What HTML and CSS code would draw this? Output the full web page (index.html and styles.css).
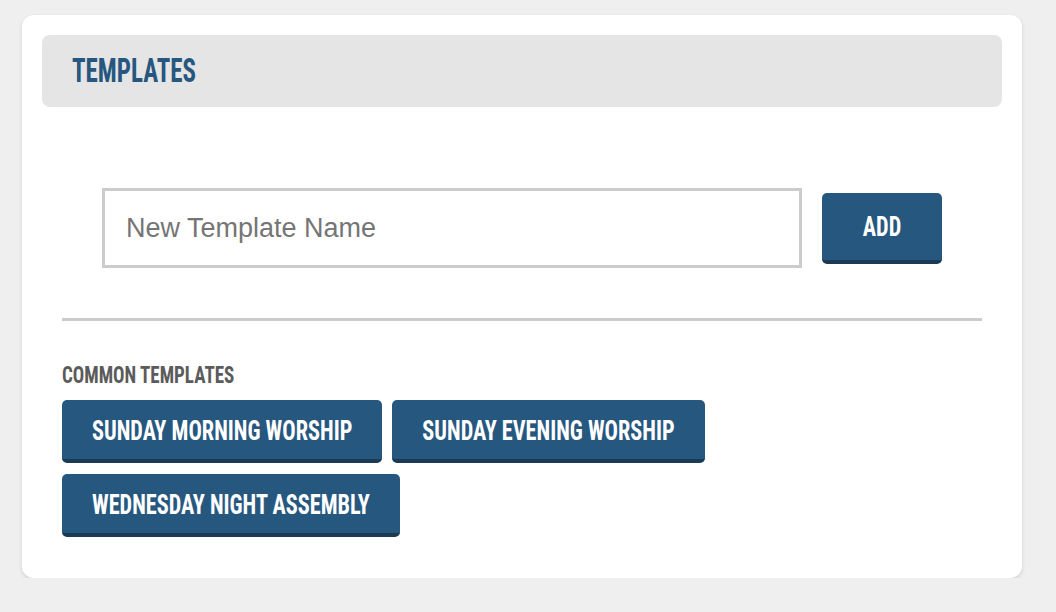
FILE: index.html
```html
<!DOCTYPE html>
<html lang="en">
<head>
<meta charset="utf-8">
<title>Templates</title>
<link rel="stylesheet" href="styles.css">
</head>
<body>
<div class="card">
  <div class="card-header">
    <h2 class="title"><span class="tall">TEMPLATES</span></h2>
  </div>
  <form class="new-row" onsubmit="return false">
    <input class="name-input" type="text" placeholder="New Template Name">
    <button class="btn btn-add" type="button"><span class="tall">ADD</span></button>
  </form>
  <hr class="divider">
  <div class="common">
    <div class="label"><span class="tall">COMMON TEMPLATES</span></div>
    <div class="chips">
      <button class="btn chip" type="button"><span class="tall">SUNDAY MORNING WORSHIP</span></button>
      <button class="btn chip" type="button"><span class="tall">SUNDAY EVENING WORSHIP</span></button>
      <button class="btn chip" type="button"><span class="tall">WEDNESDAY NIGHT ASSEMBLY</span></button>
    </div>
  </div>
</div>
</body>
</html>
```
FILE: styles.css
```css
html, body {
  margin: 0;
  padding: 0;
  background: #efefef;
}
body {
  padding: 15px 0 0 22px;
  font-family: "Roboto Condensed", "Open Sans", sans-serif;
}
.card {
  box-sizing: border-box;
  width: 1000px;
  background: #fff;
  border-radius: 12px;
  padding: 20px 20px 41px;
  box-shadow: 0 2px 4px rgba(0, 0, 0, 0.12);
}
.card-header {
  box-sizing: border-box;
  height: 72px;
  background: #e5e5e5;
  border-radius: 8px;
  padding: 0 30px;
  display: flex;
  align-items: center;
}
.title {
  margin: 0;
  font-size: 25px;
  font-weight: 700;
  color: #27577f;
  line-height: 30px;
}
.tall {
  display: inline-block;
  transform: scaleY(1.2);
}
.title .tall {
  transform: scaleY(1.32);
}
.new-row {
  margin: 81px 0 0;
  display: flex;
  justify-content: center;
  align-items: center;
  gap: 20px;
}
.name-input {
  box-sizing: border-box;
  width: 700px;
  height: 80px;
  border: 3px solid #cccccc;
  border-radius: 0;
  padding: 0 21px;
  font-family: "Liberation Sans", Arial, sans-serif;
  font-size: 27px;
  color: #333;
  outline: none;
  background: #fff;
}
.name-input::placeholder {
  color: #757575;
}
.btn {
  box-sizing: border-box;
  border: 0;
  border-bottom: 4px solid #1b3a55;
  border-radius: 5px;
  background: #26577f;
  color: #fff;
  font-family: "Roboto Condensed", "Open Sans", sans-serif;
  font-weight: 700;
  font-size: 22.25px;
  line-height: 24px;
  padding: 0 30px;
  cursor: pointer;
  white-space: nowrap;
}
.btn-add {
  width: 120px;
  height: 71px;
  padding: 0;
}
.divider {
  margin: 50px 20px 0;
  border: 0;
  height: 3px;
  background: #cccccc;
}
.common {
  padding: 0 20px;
}
.label {
  margin-top: 45px;
  font-size: 19px;
  line-height: 20px;
  font-weight: 700;
  color: #5b5b5b;
}
.label .tall {
  transform: scaleY(1.22);
}
.chips {
  margin-top: 14px;
  display: flex;
  flex-wrap: wrap;
  gap: 11px 10px;
}
.chip {
  height: 63px;
}
```
